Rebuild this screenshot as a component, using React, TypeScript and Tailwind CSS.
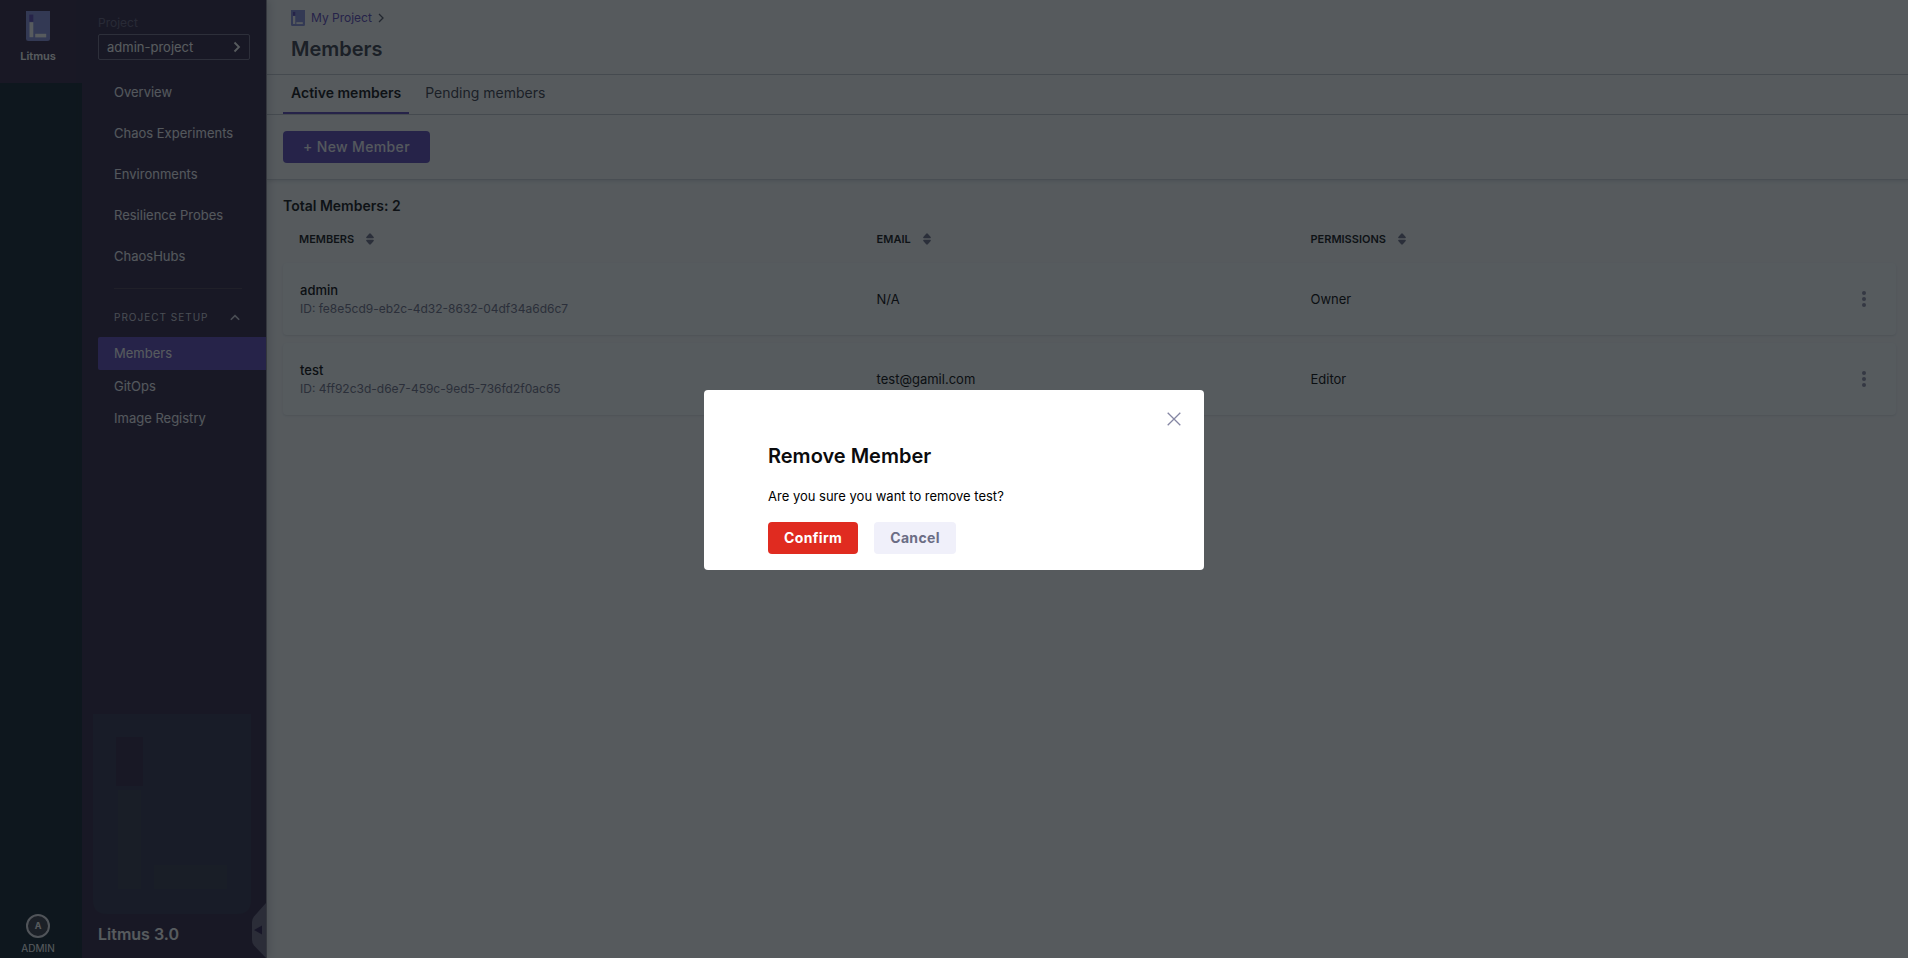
import { ReactNode } from 'react';

const navItems = ['Overview', 'Chaos Experiments', 'Environments', 'Resilience Probes', 'ChaosHubs'];

const setupItems = [
  { label: 'Members', active: true },
  { label: 'GitOps', active: false },
  { label: 'Image Registry', active: false },
];

const members = [
  { name: 'admin', id: 'fe8e5cd9-eb2c-4d32-8632-04df34a6d6c7', email: 'N/A', role: 'Owner' },
  { name: 'test', id: '4ff92c3d-d6e7-459c-9ed5-736fd2f0ac65', email: 'test@gamil.com', role: 'Editor' },
];

function LitmusLogo({ className }: { className: string }) {
  return (
    <svg viewBox="0 0 24 30" preserveAspectRatio="none" className={className} aria-hidden="true">
      <path d="M0 0H24V27.5Q24 30 21.5 30H2.5Q0 30 0 27.5Z" fill="#858cdd" />
      <rect x="3.3" y="3.6" width="4" height="7.2" fill="#5b44ba" />
      <rect x="3.5" y="11.2" width="3.8" height="15" fill="#ffffff" />
      <rect x="9.2" y="22.8" width="11" height="3.6" fill="#ffffff" />
    </svg>
  );
}

function Watermark() {
  return (
    <svg viewBox="0 0 158 200" className="h-[200px] w-[158px]" aria-hidden="true">
      <path d="M0 0H158V186Q158 200 144 200H14Q0 200 0 186Z" fill="#2c2e4a" />
      <rect x="23" y="23" width="27" height="49" fill="#2e2041" />
      <rect x="25" y="76" width="23" height="99" fill="#2f3348" />
      <rect x="61" y="151" width="73" height="24" fill="#2f3348" />
    </svg>
  );
}

function SortIcon() {
  return (
    <svg viewBox="0 0 8 12" className="h-3 w-2" fill="#6b6d85" aria-hidden="true">
      <path d="M3.2 0.7Q4 0 4.8 0.7L7.7 4Q8.2 5.2 7 5.2H1Q-0.2 5.2 0.3 4Z" />
      <path d="M3.2 11.3Q4 12 4.8 11.3L7.7 8Q8.2 6.8 7 6.8H1Q-0.2 6.8 0.3 8Z" />
    </svg>
  );
}

function ColumnHeader({ children, className }: { children: ReactNode; className?: string }) {
  return (
    <th scope="col" className={`text-left align-middle font-semibold ${className ?? ''}`}>
      <button type="button" className="flex items-center gap-3 text-[11px] leading-4 font-semibold text-[#0b0b0d] uppercase">
        {children}
        <SortIcon />
      </button>
    </th>
  );
}

function Rail() {
  return (
    <div className="flex w-[82px] shrink-0 flex-col justify-between bg-[#0b1c28] text-white">
      <a href="#litmus" className="flex h-[83px] flex-col items-center bg-[#2f2142] pt-[11px] pr-[6px]">
        <LitmusLogo className="h-[30px] w-6" />
        <span className="mt-[7px] text-[11px] leading-4 font-semibold">Litmus</span>
      </a>
      <a href="#admin" className="flex flex-col items-center pr-[6px] pb-[2px]">
        <span className="flex size-6 items-center justify-center rounded-full border-2 border-[#e6e6ee] bg-[#383946] text-[9px] font-bold">
          A
        </span>
        <span className="mt-[2px] text-[10px] leading-4">ADMIN</span>
      </a>
    </div>
  );
}

function Sidebar() {
  return (
    <nav className="relative flex w-[185px] shrink-0 flex-col border-r border-[#8a8694] bg-[#2e2041] pl-4 text-[13px] text-[#f3f3fa] shadow-[2px_0_8px_rgba(40,41,61,0.2)]">
      <div className="pt-[15px] pr-4">
        <p className="text-[12px] leading-4 text-[#625c7a]">Project</p>
        <button
          type="button"
          className="mt-[3px] flex h-[26px] w-full items-center justify-between rounded-xs border border-[#736d88] px-2 text-[13px] leading-5 text-white"
        >
          admin-project
          <svg viewBox="0 0 8 12" className="h-3 w-2" fill="none" stroke="#ffffff" strokeWidth="1.8" aria-hidden="true">
            <path d="M1.5 1.5L6 6L1.5 10.5" />
          </svg>
        </button>
      </div>
      <ul className="mt-4 flex flex-col gap-2 pl-4 leading-[33px]">
        {navItems.map((item) => (
          <li key={item}>
            <a href="#nav" className="block">
              {item}
            </a>
          </li>
        ))}
      </ul>
      <div className="mt-[15px] mr-6 ml-4 border-t border-[#47394f]" />
      <button
        type="button"
        className="mt-5 mb-3 flex items-center justify-between pr-[26px] pl-4 text-[10px] leading-4 tracking-widest text-[#d0cfdc]"
      >
        PROJECT SETUP
        <svg viewBox="0 0 10 7" className="h-[7px] w-[10px]" fill="none" stroke="#d0cfdc" strokeWidth="1.6" aria-hidden="true">
          <path d="M0.8 5.8L5 1.6L9.2 5.8" />
        </svg>
      </button>
      <ul className="leading-8">
        {setupItems.map((item) => (
          <li key={item.label}>
            <a
              href="#setup"
              className={item.active ? 'block rounded-l-xs bg-[#5b44ba] pl-4 leading-[33px] text-white' : 'block pl-4'}
            >
              {item.label}
            </a>
          </li>
        ))}
      </ul>
      <div className="mt-auto -ml-[5px]">
        <Watermark />
      </div>
      <p className="pt-2 pb-3 text-[16px] leading-6 font-semibold text-white">Litmus 3.0</p>
      <button type="button" aria-label="Collapse navigation" className="absolute right-0 bottom-0">
        <svg viewBox="0 0 14 55" className="h-[55px] w-[14px]" aria-hidden="true">
          <path d="M14 0L2 13.5Q0 16 0 19V37Q0 40 2 42.5L14 55Z" fill="#6b6480" />
          <path d="M2 27L10 22.5V31.5Z" fill="#2a1a4a" />
        </svg>
      </button>
    </nav>
  );
}

function PageHeader() {
  return (
    <header className="border-b border-[#d0d3d9] shadow-[0_1px_4px_rgba(40,41,61,0.16)]">
      <div className="px-6 pt-2 pb-[13px]">
        <a href="#project" className="flex items-center gap-[6px] text-[12px] leading-5 text-[#5b44ba]">
          <LitmusLogo className="h-4 w-[14px]" />
          My Project
          <svg viewBox="0 0 6 10" className="h-[10px] w-[6px]" fill="none" stroke="#4f5162" strokeWidth="1.3" aria-hidden="true">
            <path d="M1 1L5 5L1 9" />
          </svg>
        </a>
        <h1 className="mt-[9px] text-[20px] leading-6 font-semibold text-[#383946]">Members</h1>
      </div>
      <div role="tablist" className="flex gap-2 border-y border-[#c4c7ce] px-4 text-[14px] leading-9">
        <button role="tab" type="button" aria-selected="true" className="border-b-2 border-[#5b44ba] px-2 pb-px font-semibold text-[#0b0b0d]">
          Active members
        </button>
        <button role="tab" type="button" aria-selected="false" className="border-b-2 border-transparent px-2 pb-px text-[#383946]">
          Pending members
        </button>
      </div>
      <div className="px-4 py-4">
        <button type="button" className="h-8 rounded-sm bg-[#5b44ba] px-5 text-[14px] leading-5 font-medium tracking-wide text-[#f3f3fa]">
          + New Member
        </button>
      </div>
    </header>
  );
}

function MembersTable() {
  return (
    <section className="pt-4 pr-3 pl-4">
      <h2 className="text-[14px] leading-5 font-semibold text-[#0b0b0d]">Total Members: 2</h2>
      <table className="w-full table-fixed border-separate border-spacing-x-0 border-spacing-y-2">
        <thead>
          <tr className="h-[31px]">
            <ColumnHeader className="w-[36.8%] pb-px pl-4">Members</ColumnHeader>
            <ColumnHeader className="w-[26.9%] pb-px">Email</ColumnHeader>
            <ColumnHeader className="w-[26.9%] pb-px">Permissions</ColumnHeader>
            <th aria-label="Actions" />
          </tr>
        </thead>
        <tbody className="text-[13px] leading-5 text-black">
          {members.map((member) => (
            <tr key={member.id} className="h-[72px] rounded-sm bg-[#fcfdfe] shadow-[0_1px_2px_rgba(96,97,112,0.16)]">
              <td className="rounded-l-sm pt-px pl-[17px]">
                <p className="leading-[18px] font-medium">{member.name}</p>
                <p className="text-[12px] leading-5 text-[#6b6d85]">ID: {member.id}</p>
              </td>
              <td>{member.email}</td>
              <td>{member.role}</td>
              <td className="rounded-r-sm">
                <button type="button" aria-label={`Options for ${member.name}`} className="mr-[30px] ml-auto block">
                  <svg viewBox="0 0 4 16" className="h-4 w-1" fill="#8a8ba3" aria-hidden="true">
                    <circle cx="2" cy="2" r="2" />
                    <circle cx="2" cy="8" r="2" />
                    <circle cx="2" cy="14" r="2" />
                  </svg>
                </button>
              </td>
            </tr>
          ))}
        </tbody>
      </table>
    </section>
  );
}

function RemoveMemberDialog() {
  return (
    <div className="fixed inset-0 flex items-center justify-center bg-[rgba(16,22,26,0.7)] pt-0.5">
      <div role="dialog" aria-modal="true" aria-labelledby="remove-title" className="relative w-[500px] rounded-sm bg-white px-16 pt-[52px] pb-4 text-black">
        <button type="button" aria-label="Close" className="absolute top-[22px] right-[23px]">
          <svg viewBox="0 0 14 14" className="size-[14px]" fill="none" stroke="#8586a3" strokeWidth="1.3" aria-hidden="true">
            <path d="M0.7 0.7L13.3 13.3M13.3 0.7L0.7 13.3" />
          </svg>
        </button>
        <h2 id="remove-title" className="text-[20px] leading-7 font-semibold text-[#0b0b0d]">
          Remove Member
        </h2>
        <p className="mt-4 text-[13px] leading-5">Are you sure you want to remove test?</p>
        <div className="mt-4 flex gap-4">
          <button type="button" className="h-8 rounded-sm bg-[#e02b20] px-4 text-[14px] leading-5 font-bold tracking-wide text-white">
            Confirm
          </button>
          <button type="button" className="h-8 rounded-sm bg-[#f0f0fa] px-4 text-[14px] leading-5 font-bold tracking-wide text-[#6b6d85]">
            Cancel
          </button>
        </div>
      </div>
    </div>
  );
}

export default function App() {
  return (
    <div className="flex min-h-screen bg-[#fafbfc] font-[Inter,sans-serif]">
      <Rail />
      <Sidebar />
      <main className="min-w-0 flex-1">
        <PageHeader />
        <MembersTable />
      </main>
      <RemoveMemberDialog />
    </div>
  );
}
